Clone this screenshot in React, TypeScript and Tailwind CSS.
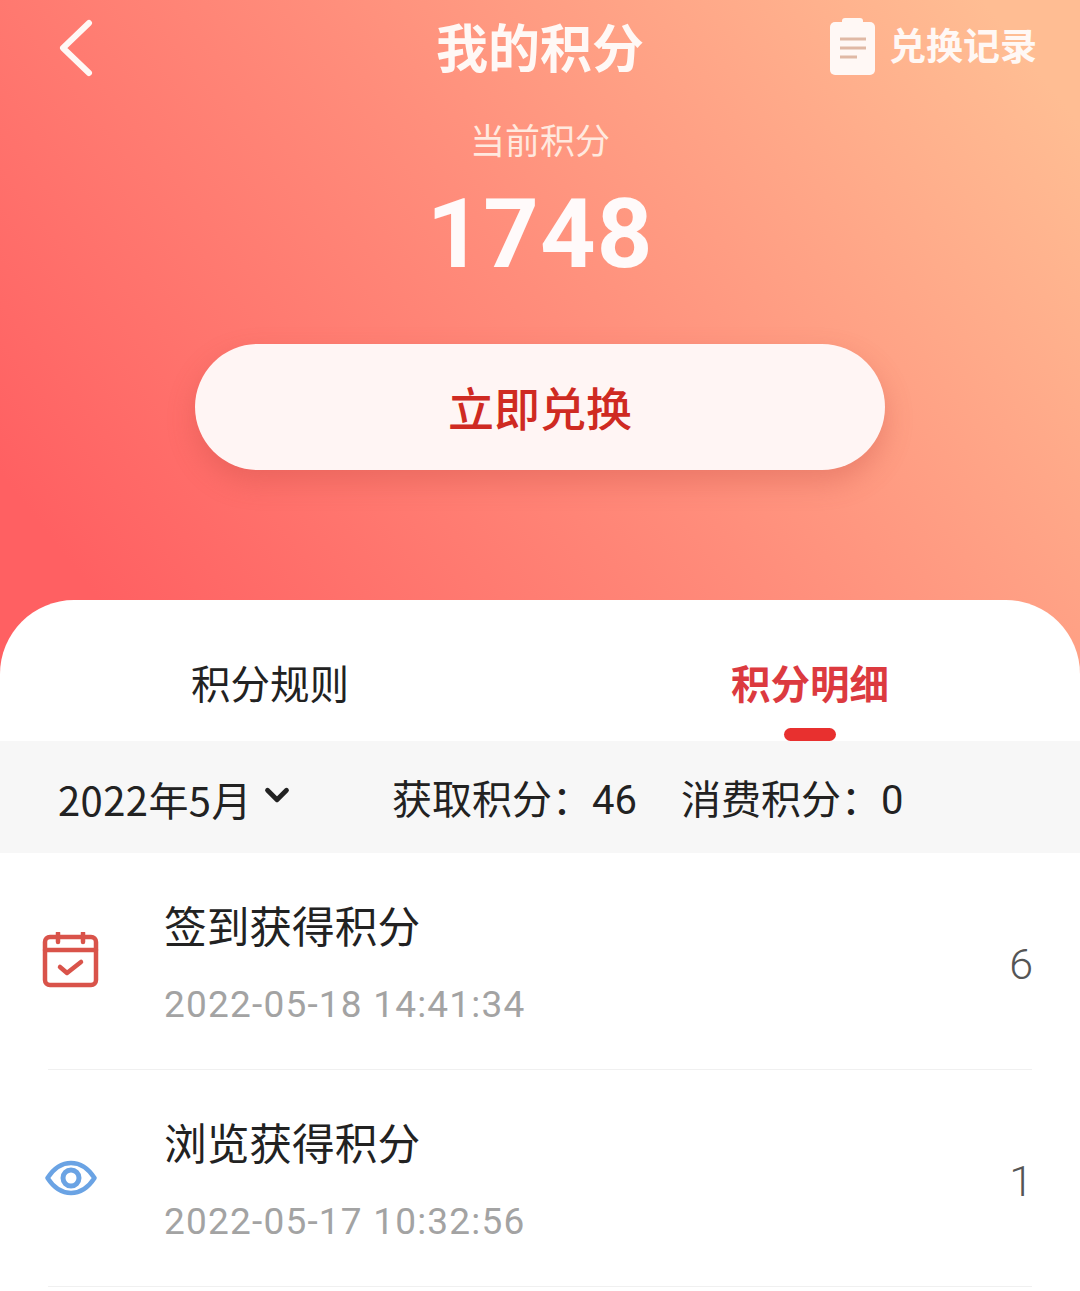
import { ChevronDown } from "lucide-react";

const cjk = "font-['Noto_Sans_CJK_SC','Noto_Sans',sans-serif]";

function CalendarIcon() {
  return (
    <svg width="58" height="58" viewBox="0 0 58 58" fill="none" stroke="#d9534a" strokeWidth="4.5" strokeLinecap="round" strokeLinejoin="round">
      <rect x="3" y="5" width="51" height="48" rx="5" />
      <path d="M3 18H54" />
      <path d="M16 1V10M41 1V10" />
      <path d="M18 35L25 41L39 30" strokeWidth="4.5" />
    </svg>
  );
}

function EyeIcon() {
  return (
    <svg width="52" height="36" viewBox="0 0 52 36" fill="none" stroke="#6aa3e4">
      <path d="M2.5 18C9 8 17 3 26 3C35 3 43 8 49.5 18C43 28 35 33 26 33C17 33 9 28 2.5 18Z" strokeWidth="4.5" strokeLinejoin="round" />
      <circle cx="26" cy="18" r="8" strokeWidth="5" />
    </svg>
  );
}

function RecordRow({ icon, title, time, value }: { icon: React.ReactNode; title: string; time: string; value: string }) {
  return (
    <div className="px-12">
      <div className="flex h-[217px] items-center border-b border-[#f0f0f0]">
        <div className="flex w-[116px] items-center">
          <div className="-ml-[6px] flex w-[58px] justify-center">{icon}</div>
        </div>
        <div className="flex-1 pb-[2px]">
          <div className="text-[42.7px] leading-[60px] text-[#222222]">{title}</div>
          <div className="mt-[29px] font-['Roboto',sans-serif] text-[37px] leading-[44px] tracking-[1.2px] text-[#a3a3a3]">{time}</div>
        </div>
        <div className="-mr-[1px] pt-[6px] font-['Roboto',sans-serif] text-[43px] font-light text-[#555555]">{value}</div>
      </div>
    </div>
  );
}

export default function App() {
  return (
    <div className={`${cjk} h-[1291px] w-[1080px] overflow-hidden bg-white bg-[linear-gradient(52deg,#ff6062_10%,#ff8d7b_52%,#ffbd93_94%)] bg-[length:100%_680px] bg-no-repeat`}>
      <div className="flex h-[600px] flex-col items-center">
        <div className="relative flex h-[96px] w-full items-center justify-center">
          <svg className="absolute top-[19px] left-[58px]" width="36" height="58" viewBox="0 0 36 58" fill="none" stroke="#fff8f5" strokeWidth="6" strokeLinecap="round" strokeLinejoin="round">
            <path d="M31 4L5 29L31 54" />
          </svg>
          <div className="-mt-[4px] text-[52px] leading-[96px] font-bold text-[#fff8f5]">我的积分</div>
          <div className="absolute top-[18px] right-[43px] flex items-center gap-[14px]">
            <svg width="45" height="58" viewBox="0 0 45 58">
              <rect x="0" y="4" width="45" height="53" rx="5" fill="#fff8f5" />
              <rect x="12" y="0" width="21" height="7" rx="3" fill="#fff8f5" />
              <path d="M10 21H36M10 30H36M10 39H27" stroke="#e0b9a5" strokeWidth="3" />
            </svg>
            <div className="-mt-[4px] text-[37px] font-bold text-[#fff8f5]">兑换记录</div>
          </div>
        </div>
        <div className="mt-[19px] text-[35px] leading-[48px] text-[#ffe9df]">当前积分</div>
        <div className="mt-[16px] font-['Roboto',sans-serif] text-[97px] leading-[110px] font-bold tracking-[1px] text-[#fffafa]">1748</div>
        <button className={`${cjk} mt-[55px] flex h-[126px] w-[690px] items-center justify-center rounded-full bg-[#fff5f4] pb-[2px] text-[46px] font-medium text-[#cf2a22] shadow-[0_12px_28px_rgba(190,70,60,0.3)]`}>
          立即兑换
        </button>
      </div>

      <div className="flex h-[691px] flex-col rounded-t-[74px] bg-white">
        <div className="flex h-[141px]">
          <div className="flex w-[540px] justify-center pt-[53px] text-[39.5px] leading-[58px] text-[#222222]">积分规则</div>
          <div className="flex w-[540px] flex-col items-center pt-[53px]">
            <div className="text-[39.5px] leading-[58px] font-bold text-[#dc3a3f]">积分明细</div>
            <div className="mt-[17px] h-[13px] w-[52px] rounded-full bg-[#e8302f]" />
          </div>
        </div>
        <div className="flex h-[112px] items-center bg-[#f7f7f7] pt-[3px] pl-[58px] text-[40px] text-[#222222]">
          <div className="flex w-[334px] items-center tracking-[0.4px]">
            <span>2022年5月</span>
            <ChevronDown className="mb-[8px] ml-[6px]" size={38} strokeWidth={3} />
          </div>
          <div className="w-[289px]">获取积分：<span className="font-['Roboto',sans-serif]">46</span></div>
          <div>消费积分：<span className="font-['Roboto',sans-serif]">0</span></div>
        </div>
        <RecordRow icon={<CalendarIcon />} title="签到获得积分" time="2022-05-18 14:41:34" value="6" />
        <RecordRow icon={<EyeIcon />} title="浏览获得积分" time="2022-05-17 10:32:56" value="1" />
      </div>
    </div>
  );
}
